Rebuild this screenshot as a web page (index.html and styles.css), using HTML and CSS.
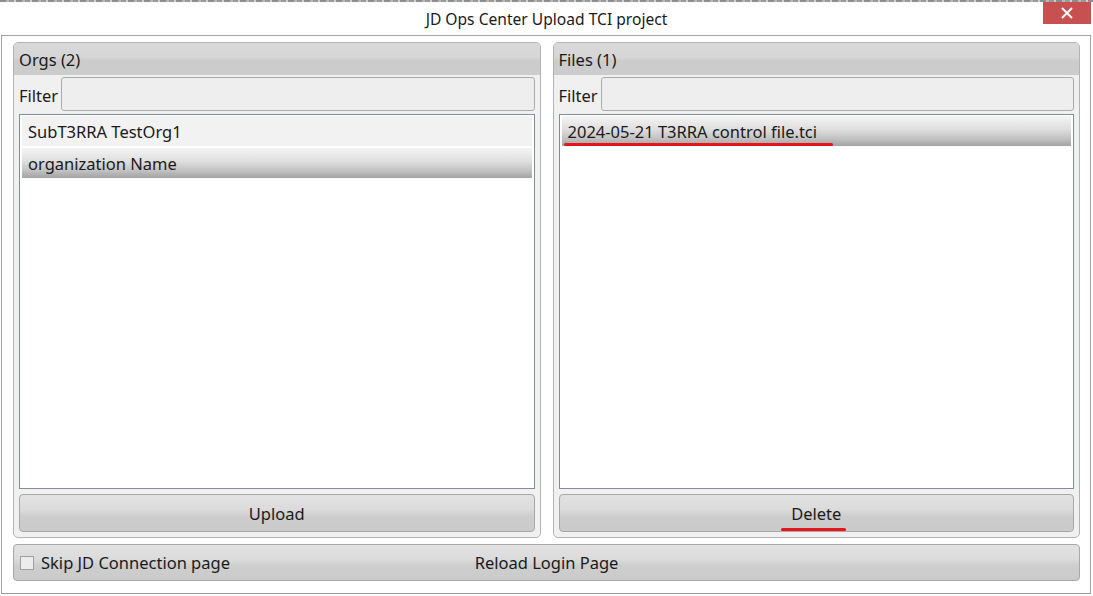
FILE: index.html
```html
<!DOCTYPE html>
<html>
<head>
<meta charset="utf-8">
<link rel="stylesheet" href="styles.css">
</head>
<body>
<div class="topstrip"></div>
<div class="titlebar">
  <div class="title">JD Ops Center Upload TCI project</div>
  <div class="close"><svg width="14" height="14" viewBox="0 0 14 14"><path d="M2 2 L12 12 M12 2 L2 12" stroke="#fff" stroke-width="2"/></svg></div>
</div>
<div class="window">
  <div class="panels">
    <section class="panel">
      <div class="panel-head">Orgs (2)</div>
      <div class="filter-row"><span class="filter-label">Filter</span><div class="filter-input"></div></div>
      <div class="list">
        <div class="item item-plain">SubT3RRA TestOrg1</div>
        <div class="item item-selected">organization Name</div>
      </div>
      <div class="btn">Upload</div>
    </section>
    <section class="panel">
      <div class="panel-head">Files (1)</div>
      <div class="filter-row"><span class="filter-label">Filter</span><div class="filter-input"></div></div>
      <div class="list">
        <div class="item item-selected"><span class="marked">2024-05-21 T3RRA control file.tci</span></div>
      </div>
      <div class="btn"><span class="marked marked-btn">Delete</span></div>
    </section>
  </div>
  <div class="bottombar">
    <label class="skip"><span class="checkbox"></span>Skip JD Connection page</label>
    <div class="reload">Reload Login Page</div>
  </div>
</div>
</body>
</html>
```

FILE: styles.css
```css
html, body {
  margin: 0;
  padding: 0;
  background: #ffffff;
  font-family: "Noto Sans", "Open Sans", sans-serif;
  font-size: 16.5px;
  color: #1a1a1a;
  width: 1093px;
  height: 596px;
  overflow: hidden;
}

.topstrip {
  height: 2px;
  background: repeating-linear-gradient(90deg, #8c8c8c 0 6px, #b8b8b8 6px 9px, #9a9a9a 9px 14px, #d0d0d0 14px 16px);
}

.titlebar {
  height: 33px;
  display: grid;
  grid-template-columns: 1fr auto 1fr;
  align-items: start;
}

.title {
  grid-column: 2;
  padding-top: 6px;
  font-size: 15.6px;
  color: #1a1a1a;
}

.close {
  grid-column: 3;
  justify-self: end;
  width: 48px;
  height: 22px;
  margin-right: 2px;
  background: #c75050;
  display: flex;
  align-items: center;
  justify-content: center;
}

.window {
  margin: 0 2px 0 1px;
  border: 1px solid #a3a3a3;
  border-bottom-color: #9a9a9a;
  height: 559px;
  box-sizing: border-box;
  padding: 6px 10px 0 11px;
  display: flex;
  flex-direction: column;
  gap: 6px;
}

.panels {
  display: flex;
  gap: 12px;
  height: 496px;
}

.panel {
  flex: 1;
  border: 1px solid #b3b3b3;
  border-radius: 5px;
  background: #f0f0f0;
  display: flex;
  flex-direction: column;
  padding: 0 5px 5px 5px;
  overflow: hidden;
}

.panel-head {
  margin: 0 -5px;
  height: 32px;
  box-sizing: border-box;
  padding: 5px 0 0 5px;
  background: linear-gradient(#d9d9d9 0%, #d6d6d6 45%, #cccccc 55%, #cccccc 100%);
}

.filter-row {
  display: flex;
  align-items: center;
  margin-top: 2px;
  height: 34px;
}

.filter-label {
  width: 42px;
  padding-top: 2px;
}

.filter-input {
  flex: 1;
  height: 34px;
  box-sizing: border-box;
  border: 1px solid #ababab;
  border-radius: 3px;
  background: #eeeeee;
}

.list {
  margin-top: 3px;
  flex: 1;
  background: #ffffff;
  border: 1px solid #828d99;
  padding: 1px 2px;
  display: flex;
  flex-direction: column;
  gap: 2px;
}

.item {
  height: 30px;
  box-sizing: border-box;
  padding: 4px 0 0 6px;
  white-space: nowrap;
}

.item-plain {
  background: #f2f2f2;
}

.item-selected {
  background: linear-gradient(#f4f4f4 0%, #dedede 45%, #c2c2c2 75%, #a3a3a3 100%);
}

.marked {
  position: relative;
}

.marked::after {
  content: "";
  position: absolute;
  left: -4px;
  right: -16px;
  bottom: -3px;
  height: 3px;
  border-radius: 2px;
  background: #e8141b;
}

.marked-btn::after {
  left: -10px;
  right: -5px;
  bottom: -6px;
}

.btn {
  margin-top: 5px;
  height: 38px;
  box-sizing: border-box;
  border: 1px solid #a8a8a8;
  border-radius: 4px;
  background: linear-gradient(#e2e2e2 0%, #dbdbdb 40%, #cdcdcd 60%, #cbcbcb 100%);
  display: flex;
  align-items: center;
  justify-content: center;
  padding-top: 1px;
}

.bottombar {
  height: 37px;
  box-sizing: border-box;
  border: 1px solid #a8a8a8;
  border-radius: 4px;
  background: linear-gradient(#e2e2e2 0%, #dbdbdb 40%, #cdcdcd 60%, #cbcbcb 100%);
  display: grid;
  grid-template-columns: 1fr;
  align-items: center;
}

.skip {
  grid-area: 1 / 1;
  display: flex;
  align-items: center;
  padding-left: 6px;
  gap: 7px;
}

.checkbox {
  width: 14px;
  height: 14px;
  box-sizing: border-box;
  border: 1px solid #a0a0a0;
  background: #ececec;
}

.reload {
  grid-area: 1 / 1;
  justify-self: center;
}
```
